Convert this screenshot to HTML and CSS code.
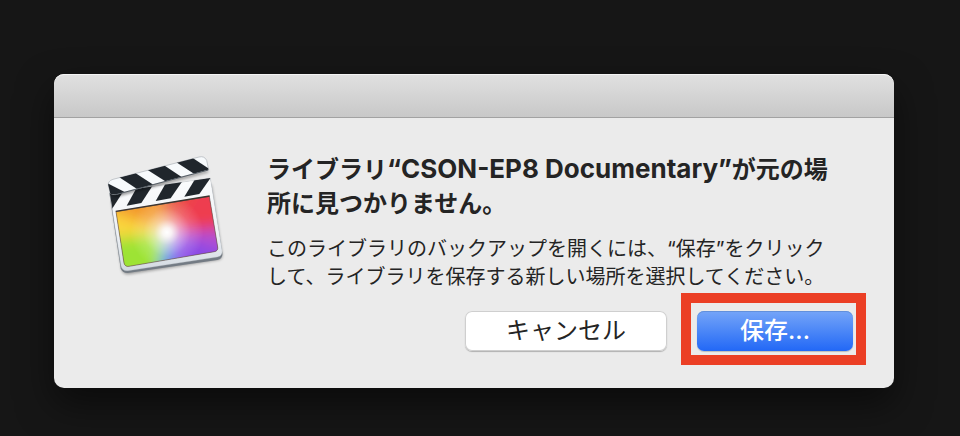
FILE: index.html
```html
<!DOCTYPE html>
<html lang="ja">
<head>
  <meta charset="UTF-8">
  <title>ライブラリが見つかりません</title>
  <meta name="viewport" content="width=device-width, initial-scale=1.0">
  <link rel="stylesheet" href="styles.css">
</head>
<body>
  <div class="dialog" role="alertdialog" aria-labelledby="title" aria-describedby="message">
    <div class="titlebar"></div>
    <div class="content">
      <svg class="app-icon" viewBox="0 0 420 420" aria-hidden="true">
        <defs>
          <linearGradient id="frame" x1="0" y1="0" x2="0" y2="1">
            <stop offset="0" stop-color="#fbfcfd"/>
            <stop offset="0.6" stop-color="#eef1f5"/>
            <stop offset="1" stop-color="#d3dae1"/>
          </linearGradient>
          <radialGradient id="glow" gradientUnits="userSpaceOnUse" cx="216" cy="262" r="110">
            <stop offset="0" stop-color="#fff"/>
            <stop offset="0.12" stop-color="#fff" stop-opacity="0.9"/>
            <stop offset="0.35" stop-color="#fff" stop-opacity="0.5"/>
            <stop offset="0.65" stop-color="#fff" stop-opacity="0.18"/>
            <stop offset="1" stop-color="#fff" stop-opacity="0"/>
          </radialGradient>
          <filter id="soft" x="-30%" y="-30%" width="160%" height="160%">
            <feGaussianBlur stdDeviation="20"/>
          </filter>
          <filter id="shade" x="-10%" y="-10%" width="120%" height="120%">
            <feGaussianBlur stdDeviation="4"/>
          </filter>
          <clipPath id="screen">
            <path d="M63 200 L343 154 L368 306 Q370 318 358 320 L102 364 Q90 366 87 354 Z"/>
          </clipPath>
          <clipPath id="arm">
            <path d="M40 121 Q38 108 54 103 L312 36 Q328 32 335 46 L341 74 L60 149 L46 146 Z"/>
          </clipPath>
          <clipPath id="band">
            <path d="M44 143 L346 99 L354 153 L54 201 Z"/>
          </clipPath>
        </defs>

        <path d="M50 170 L350 120 L382 330 Q382 344 366 346 L102 388 Q84 388 80 374 Z" fill="#000" opacity="0.35" filter="url(#shade)"/>
        <path d="M43 144 L346 100 L382 324 Q384 341 367 345 L98 384 Q81 384 77 370 Z" fill="#737b84"/>
        <path d="M44 143 L346 99 L381 315 Q384 333 367 336 L99 377 Q82 379 78 363 Z" fill="url(#frame)" stroke="#b4bac0" stroke-width="1"/>

        <!-- colour screen -->
        <g clip-path="url(#screen)">
          <rect x="50" y="140" width="330" height="240" fill="#ee7750"/>
          <g filter="url(#soft)">
            <path d="M216 262 L0 200 L0 60 L190 60 Z" fill="#f39a2d"/>
            <path d="M216 262 L0 320 L0 180 Z" fill="#fbd63c"/>
            <path d="M216 262 L185 460 L0 460 L0 290 Z" fill="#9de336"/>
            <path d="M216 262 L290 460 L175 460 Z" fill="#3e87f0"/>
            <path d="M216 262 L460 330 L420 460 L265 460 Z" fill="#8a4ae6"/>
            <path d="M216 262 L460 235 L460 340 Z" fill="#b34fd0"/>
            <path d="M216 262 L330 60 L460 60 L460 245 Z" fill="#ee3c50"/>
            <path d="M216 262 L190 60 L340 60 Z" fill="#ea5140"/>
          </g>
          <rect x="50" y="140" width="330" height="240" fill="url(#glow)"/>
        </g>
        <path d="M63 200 L343 154 L368 306 Q370 318 358 320 L102 364 Q90 366 87 354 Z" fill="none" stroke="#57504f" stroke-width="3" stroke-opacity="0.6"/>
        <path d="M62 199 L344 153" stroke="#3b3430" stroke-width="4"/>

        <!-- lower stripes -->
        <g clip-path="url(#band)" fill="#20262c">
          <path d="M40 140 L87 136 L51 192 Z"/>
          <path d="M125 128 L174 120 L139 174 L95 182 Z"/>
          <path d="M211 117 L262 109 L227 160 L182 168 Z"/>
          <path d="M299 104 L348 97 L313 147 L268 155 Z"/>
        </g>

        <!-- clapper arm -->
        <path d="M46 149 L340 76 L339 82 L64 155 Z" fill="#000" opacity="0.45" filter="url(#shade)"/>
        <path d="M40 121 Q38 108 54 103 L312 36 Q328 32 335 46 L341 74 L60 149 L46 146 Z" fill="#f7fafc" stroke="#a9afb5" stroke-width="2"/>
        <g clip-path="url(#arm)" fill="#20262c">
          <path d="M36 114 L89 141 L82 150 L42 152 Z"/>
          <path d="M73 97 L121 84 L175 119 L126 132 Z"/>
          <path d="M158 75 L207 61 L260 96 L211 109 Z"/>
          <path d="M244 52 L292 38 L345 73 L297 86 Z"/>
        </g>
        <path d="M62 149 L340 75" fill="none" stroke="#555d65" stroke-width="3"/>
      </svg>

      <div class="main">
        <h1 class="title" id="title">ライブラリ<span class="name">“CSON-EP8 Documentary”</span>が元の場<br>所に見つかりません。</h1>
        <p class="message" id="message">このライブラリのバックアップを開くには、“保存”をクリック<br>して、ライブラリを保存する新しい場所を選択してください。</p>
        <div class="buttons">
          <button type="button" class="btn cancel">キャンセル</button>
          <div class="highlight">
            <button type="button" class="btn save">保存...</button>
          </div>
        </div>
      </div>
    </div>
  </div>
</body>
</html>
```

FILE: styles.css
```css
* {
  box-sizing: border-box;
}

body {
  margin: 0;
  padding: 74px 66px 48px 54px;
  min-height: 100vh;
  background-color: #161616;
  color: #242424;
  font-family: Inter, "Noto Sans CJK JP", sans-serif;
}

.dialog {
  background-color: #ebebeb;
  border-radius: 10px;
  box-shadow: 0 16px 36px rgba(0, 0, 0, 0.5);
}

.titlebar {
  height: 44px;
  background: linear-gradient(#e0e0e0, #c8c8c8);
  border-top: 1px solid #f4f4f4;
  border-bottom: 1px solid #a2a2a2;
  border-radius: 10px 10px 0 0;
}

.content {
  display: flex;
  align-items: flex-start;
  gap: 32px;
  padding: 27px 41px 37px;
}

.app-icon {
  flex: none;
  width: 140px;
  height: 140px;
}

.main {
  flex: 1;
  padding-top: 7px;
}

.title {
  margin: 0;
  font-size: 24px;
  font-weight: 700;
  line-height: 34px;
  white-space: nowrap;
}

.name {
  font-size: 26px;
}

.message {
  margin: 14px 0 0;
  font-size: 20px;
  line-height: 28px;
  white-space: nowrap;
}

.buttons {
  display: flex;
  justify-content: flex-end;
  gap: 30px;
  margin-top: 20px;
}

.btn {
  display: block;
  height: 40px;
  padding: 0;
  border: none;
  border-radius: 7px;
  font-family: inherit;
  font-size: 24px;
  line-height: 40px;
}

.cancel {
  width: 202px;
  background-color: #fff;
  color: #242424;
  box-shadow: inset 0 0 0 1px #cfcfcf, 0 1px 1px rgba(0, 0, 0, 0.25);
}

.save {
  width: 156px;
  background: linear-gradient(#75a5f8, #2268f6);
  color: #fff;
  font-weight: 500;
  box-shadow: inset 0 1px 0 #6290dc, 0 1px 1px rgba(0, 0, 0, 0.2);
}

.highlight {
  position: relative;
}

/* red marker drawn round the save button */
.highlight::after {
  content: "";
  position: absolute;
  inset: -18px -13px -14px -16px;
  border: 10px solid #eb3f25;
  pointer-events: none;
}
```
